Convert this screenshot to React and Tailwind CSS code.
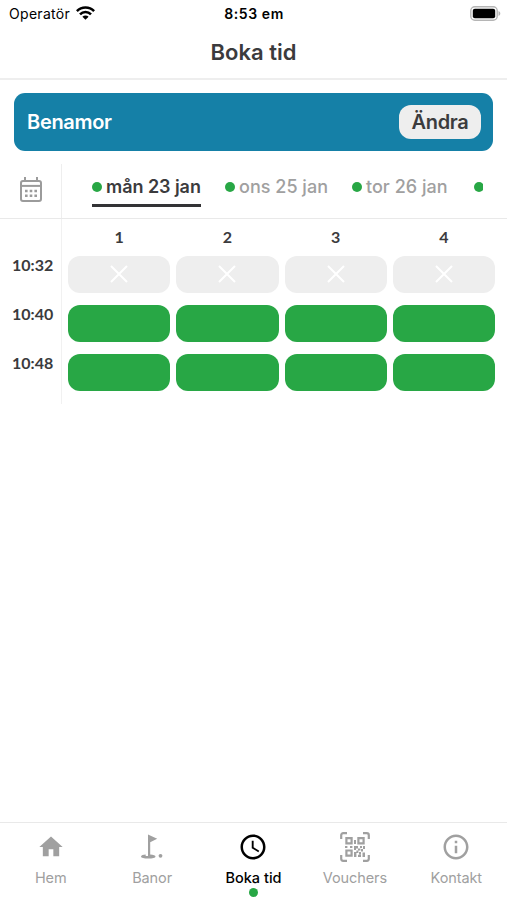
import { MdHome, MdAccessTime, MdInfoOutline } from 'react-icons/md';

const days = [
  { label: 'mån 23 jan', active: true, width: 'w-[109px]' },
  { label: 'ons 25 jan', active: false, width: 'w-[103px]' },
  { label: 'tor 26 jan', active: false, width: 'w-[98px]' },
];

const columns = [1, 2, 3, 4];

const rows = [
  { time: '10:32', free: false },
  { time: '10:40', free: true },
  { time: '10:48', free: true },
];

const FlagIcon = () => (
  <svg width="24" height="26" viewBox="0 0 24 26" fill="currentColor">
    <path d="M8 0.500 17.200 4.700 10.200 8.300V20.400c3.200.2 5.300.9 5.300 2 0 1.300-3 2.100-7.200 2.100S1 23.700 1 22.400c0-1.200 2.400-1.900 4.700-2v1.500H8Z" />
    <circle cx="20.500" cy="21.800" r="1.900" />
  </svg>
);

const QrIcon = () => (
  <svg width="30" height="30" viewBox="0 0 30 30" fill="none" stroke="currentColor" strokeWidth="2.200">
    <path d="M1.200 7V3.200a2 2 0 0 1 2-2H7M23 1.200h3.800a2 2 0 0 1 2 2V7M28.800 23v3.800a2 2 0 0 1-2 2H23M7 28.800H3.200a2 2 0 0 1-2-2V23" />
    <path d="M6.400 6.100h5.200v5.200H6.400ZM18.400 6.100h5.200v5.200h-5.200ZM6.400 18.500h5.200v5.200H6.400Z" />
    <path
      d="M14 8h2v4h-2ZM5 14h2.400v2H5ZM10 14h2.400v2H10ZM14 14h4v2.400h-2V18h-2ZM20 14h2v2h-2ZM23 14h2v3h-2ZM18 16.500h2.400v2H18ZM21 17h2v2.400h-2ZM14 20h2.400v-1.500h2V21h-2v4H14ZM19 20h2v2.400h-2ZM22.500 20.500H25V25h-2.500ZM18 22.800h3V25h-3Z"
      fill="currentColor"
      stroke="none"
    />
  </svg>
);

const tabs = [
  { label: 'Hem', icon: <MdHome size={28} /> },
  { label: 'Banor', icon: <FlagIcon /> },
  { label: 'Boka tid', icon: <MdAccessTime size={30} />, active: true },
  { label: 'Vouchers', icon: <QrIcon /> },
  { label: 'Kontakt', icon: <MdInfoOutline size={30} /> },
];

const StatusBar = () => (
  <div className="flex h-[27px] items-center justify-between pl-[9px] pr-[6px] text-black">
    <div className="flex w-[102px] items-center gap-[6px]">
      <span className="text-[14px] tracking-[0.3px]">Operatör</span>
      <svg width="19" height="14" viewBox="0 0 19 14" className="mb-[2px]" fill="none" stroke="currentColor" strokeWidth="2.600">
        <path d="M.9 5.100a12.200 12.200 0 0 1 17.200 0" />
        <path d="M4 8.300a7.800 7.800 0 0 1 11 0" />
        <path d="m9.500 13.800-3.100-3.100a4.400 4.400 0 0 1 6.200 0Z" fill="currentColor" stroke="none" />
      </svg>
    </div>
    <span className="text-[14px] font-semibold tracking-[0.6px]">8:53 em</span>
    <div className="flex w-[104px] justify-end">
      <svg width="31" height="15" viewBox="0 0 31 15">
        <rect x=".8" y=".8" width="26.400" height="13.400" rx="4" fill="#fff" stroke="#b5b5b5" strokeWidth="1.400" />
        <rect x="2.800" y="2.800" width="22.400" height="9.400" rx="2" fill="#000" />
        <path d="M28.500 5v5c1.100-.4 1.800-1.300 1.800-2.500S29.600 5.400 28.500 5Z" fill="#b5b5b5" />
      </svg>
    </div>
  </div>
);

const CalendarIcon = () => (
  <svg width="22" height="25" viewBox="0 0 22 25" fill="none" stroke="#9b9b9b" strokeWidth="2">
    <rect x="1" y="4" width="20" height="20" rx="2" />
    <path d="M1 8.900h20" />
    <path d="M5 0v4M17 0v4" />
    <path d="M5 14h2.600M9.700 14h2.600M14.400 14h2.600M5 18.700h2.600M9.700 18.700h2.600M14.400 18.700h2.600" strokeWidth="2.400" />
  </svg>
);

const Dot = () => <span className="size-[10px] shrink-0 rounded-full bg-[#28a745]" />;

const Slot = ({ free }) => (
  <div
    className={`flex h-[37px] items-center justify-center rounded-[12px] ${free ? 'bg-[#28a745]' : 'bg-[#eeeeee]'}`}
  >
    {!free && (
      <svg width="18" height="18" viewBox="0 0 18 18" className="mb-[2px]" stroke="#fff" strokeWidth="2">
        <path d="m1 1 16 16M17 1 1 17" />
      </svg>
    )}
  </div>
);

const App = () => (
  <div className="flex h-[900px] w-[507px] flex-col overflow-hidden bg-white font-['Inter',sans-serif] text-[#3b3b3d]">
    <StatusBar />
    <header className="flex h-[53px] items-center justify-center border-b-2 border-[#eeeeee] pb-px">
      <h1 className="text-[22px] font-semibold">Boka tid</h1>
    </header>

    <div className="mx-[14px] mt-[12.500px] flex h-[58.500px] shrink-0 items-center justify-between rounded-[11px] bg-[#1580a7] pl-[13px] pr-[12px]">
      <span className="text-[20px] font-semibold tracking-[-0.3px] text-white">Benamor</span>
      <button className="h-[34px] w-[82px] rounded-[12px] bg-[#eeeeee] text-[20px] font-semibold tracking-[-0.3px]">
        Ändra
      </button>
    </div>

    <div className="mt-[13px] flex h-[55px] shrink-0 border-b border-[#e9e9e9]">
      <div className="flex w-[62px] items-center justify-center border-r border-[#eeeeee] pb-[3px]">
        <CalendarIcon />
      </div>
      <div className="ml-[30px] flex w-[391px] gap-[24px] overflow-hidden pt-[10px]">
        {days.map((day) => (
          <div
            key={day.label}
            className={`flex h-[33px] shrink-0 items-start gap-[4px] whitespace-nowrap ${day.width} ${
              day.active ? 'border-b-[3px] border-[#333335] font-semibold' : 'font-medium text-[#a0a0a0]'
            }`}
          >
            <span className="flex h-[26px] items-center">
              <Dot />
            </span>
            <span className={`text-[18px] leading-[26px] ${day.active ? '-tracking-[0.05px]' : 'tracking-[0.02px]'}`}>
              {day.label}
            </span>
          </div>
        ))}
        <span className="flex h-[26px] items-center">
          <Dot />
        </span>
      </div>
    </div>

    <div className="flex shrink-0">
      <div className="flex w-[62px] flex-col gap-[12px] border-r border-[#f1f1f1] pl-[12px] pt-[36px] font-['Lato',sans-serif]">
        {rows.map((row) => (
          <span key={row.time} className="h-[37px] text-[16px] font-bold leading-[20px]">
            {row.time}
          </span>
        ))}
      </div>
      <div className="flex w-[439px] flex-col gap-[12px] pb-[13px] pl-[6px] pr-[6px]">
        <div className="-mb-[12px] grid h-[37px] grid-cols-4 gap-[6px] pt-[8px] text-center font-['Lato',sans-serif] text-[16px] font-bold leading-[20px]">
          {columns.map((n) => (
            <span key={n}>{n}</span>
          ))}
        </div>
        {rows.map((row) => (
          <div key={row.time} className="grid grid-cols-4 gap-[6px]">
            {columns.map((n) => (
              <Slot key={n} free={row.free} />
            ))}
          </div>
        ))}
      </div>
    </div>

    <nav className="mt-auto grid h-[78px] shrink-0 grid-cols-5 border-t border-[#e9e9e9]">
      {tabs.map(({ label, icon, active }) => (
        <div key={label} className={`flex flex-col items-center pt-[8px] ${active ? 'text-black' : 'text-[#a0a0a0]'}`}>
          <span className="flex h-[32px] items-center">{icon}</span>
          <span
            className={`mt-[5px] text-[14.5px] leading-[20px] ${active ? 'font-medium' : 'tracking-[-0.1px]'}`}
          >
            {label}
          </span>
          {active && <span className="size-[9px] rounded-full bg-[#28a745]" />}
        </div>
      ))}
    </nav>
  </div>
);

export default App;
